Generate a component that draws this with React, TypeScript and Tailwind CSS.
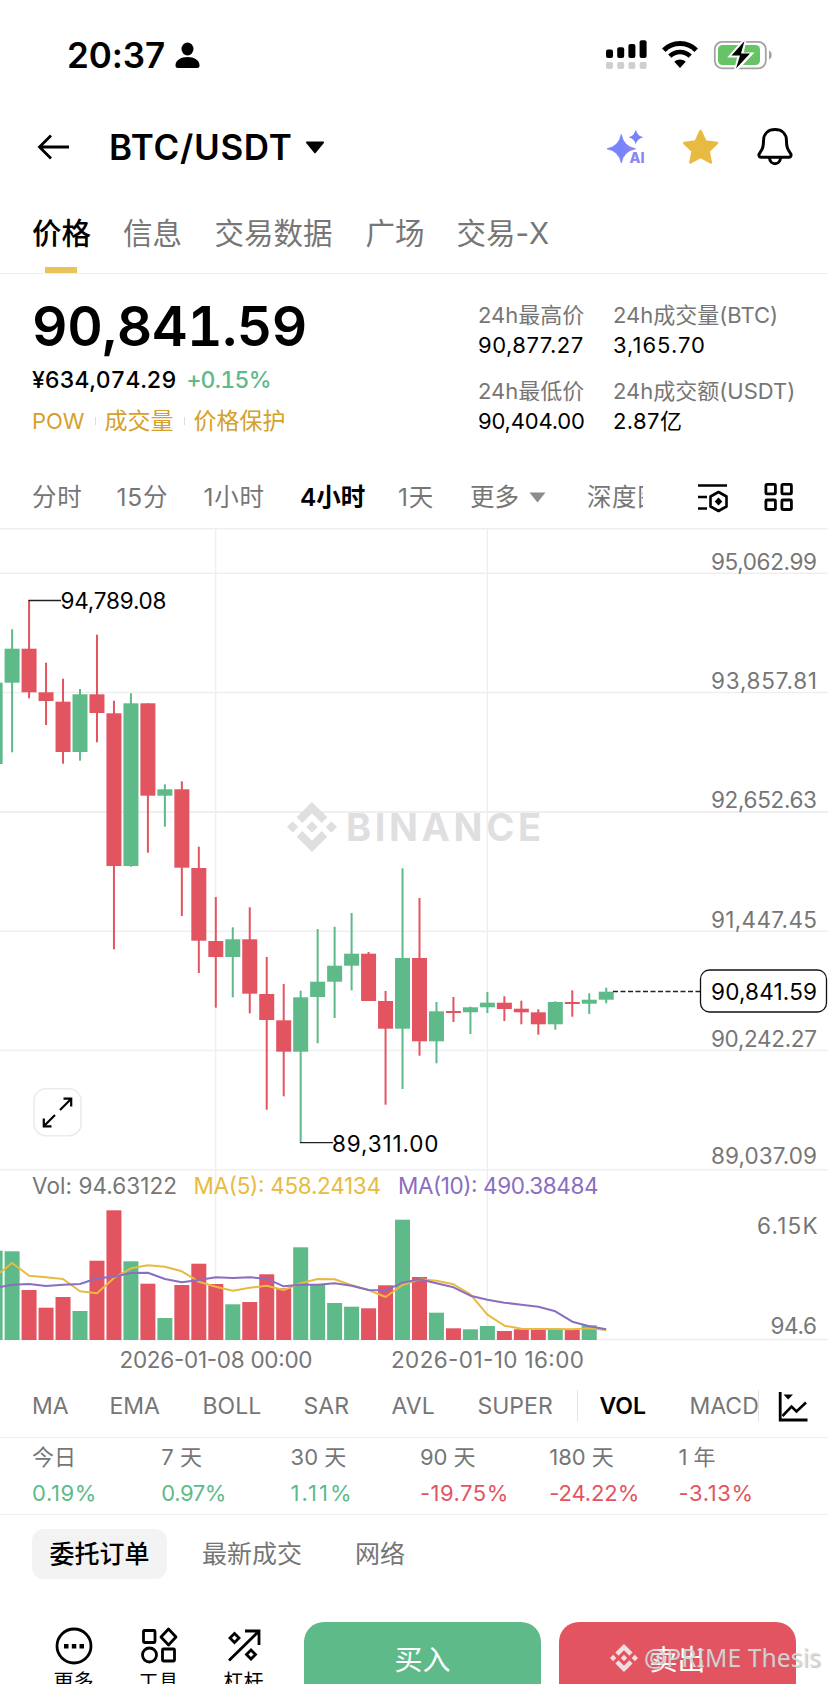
import { SiBinance } from "react-icons/si";

const GREEN = "#5eba89";
const RED = "#e35461";
const YELLOW = "#e7bb41";
const PURPLE = "#8a6ec1";

const STEP = 16.975;
const cx = (i: number) => 12.1 + i * STEP;

// [up, high, bodyTop, bodyBottom, low, volumeTop]
const candles: [number, number, number, number, number, number][] = [
  [1, 682.7, 682.7, 764, 764, 1250.7],
  [1, 629.3, 648.7, 682.7, 752.3, 1251.3],
  [0, 600, 648.7, 692.3, 698.3, 1290],
  [0, 662.7, 692.3, 701, 725, 1307.7],
  [0, 678.7, 701.7, 752, 763.7, 1297],
  [1, 689, 694.3, 752, 760.7, 1311],
  [0, 634.7, 694.3, 713, 742.3, 1260.7],
  [0, 700.7, 713.3, 866, 949.3, 1210.3],
  [1, 693.3, 703.3, 866, 866.7, 1261.3],
  [0, 703.3, 703.3, 795.7, 852.7, 1283.7],
  [1, 784.3, 789.3, 795.7, 826.7, 1318],
  [0, 781.3, 789.3, 867.7, 916, 1285],
  [0, 846.7, 868, 940.7, 973, 1263.7],
  [0, 897, 941, 957, 1007.7, 1284],
  [1, 927.3, 939.3, 957, 997.3, 1304.3],
  [0, 907.3, 939.3, 993.7, 1013.3, 1302],
  [0, 957, 994, 1020, 1109.7, 1274.3],
  [0, 984, 1020.3, 1051.7, 1096.3, 1288.3],
  [1, 990.7, 997.3, 1051.7, 1142.7, 1247.3],
  [1, 929, 981.7, 997, 1043.3, 1285],
  [1, 926.7, 965.7, 981.7, 1018, 1303],
  [1, 913, 953.7, 965.7, 990.3, 1306.7],
  [0, 952, 953.7, 1001, 1001, 1308.3],
  [0, 991, 1001, 1028.7, 1104.7, 1285.3],
  [1, 868.3, 958, 1028.7, 1089, 1219.7],
  [0, 898, 958, 1041.3, 1055.7, 1277],
  [1, 1002, 1011.3, 1041.3, 1063.3, 1312.7],
  [0, 997, 1011, 1013, 1022, 1328.3],
  [1, 1006.7, 1007.3, 1012.3, 1034, 1329.3],
  [1, 992, 1002.7, 1007.3, 1013, 1326],
  [0, 996.3, 1002.7, 1009, 1021, 1331],
  [0, 1000.7, 1008.7, 1012.3, 1024.3, 1329.3],
  [0, 1009.3, 1012.3, 1024.3, 1034.7, 1330],
  [1, 1001.3, 1002, 1024.3, 1029.7, 1330],
  [0, 990.3, 1002, 1004, 1016.7, 1330],
  [1, 993.3, 999.7, 1003.7, 1014, 1325.3],
  [1, 987.7, 991.7, 999.7, 1003.3, 1340],
];

const ma5 = [
  1263, 1275.7, 1277.3, 1279, 1291.3, 1293.3, 1278, 1268.3, 1265.3, 1266.7, 1271.3, 1281.7, 1286.7, 1290.7, 1287.7,
  1285.7, 1290, 1283.3, 1279, 1279.3, 1285.3, 1290, 1297, 1285, 1279.3, 1280.7, 1284.3, 1294.3, 1314.7, 1325.7,
  1328.7, 1329, 1329, 1329.2, 1328.3, 1330,
];
const ma10 = [
  1284.7, 1284, 1286, 1284.7, 1284, 1278.3, 1276.7, 1273, 1272.7, 1279, 1282.3, 1280, 1277.3, 1278, 1277.3, 1278.7,
  1286.3, 1284.7, 1284.7, 1283.3, 1285.7, 1290, 1290.3, 1282.7, 1279.3, 1283.3, 1287.3, 1295.7, 1299.7, 1302.7,
  1304.7, 1306.7, 1311.3, 1321.7, 1326.3, 1329.3,
];
const line = (start: number, ys: number[]) =>
  `0,${start} ` + ys.map((y, i) => `${cx(i).toFixed(1)},${y}`).join(" ");

const priceAxis: [string, number][] = [
  ["95,062.99", 569.5],
  ["93,857.81", 689],
  ["92,652.63", 808],
  ["91,447.45", 927.5],
  ["90,242.27", 1046.5],
  ["89,037.09", 1163.5],
];

const topTabs = [
  { label: "价格", w: "w-[91px]" },
  { label: "信息", w: "w-[91.5px]" },
  { label: "交易数据", w: "w-[151px]" },
  { label: "广场", w: "w-[91px]" },
  { label: "交易-X", w: "w-[100px]" },
];

const intervals = [
  { label: "分时", w: "w-[84.5px]" },
  { label: "15分", w: "w-[87px]" },
  { label: "1小时", w: "w-[96.5px]" },
  { label: "4小时", w: "w-[98px]", active: true },
  { label: "1天", w: "w-[72px]" },
];

const indicators = [
  { label: "MA", w: "w-[77.5px]" },
  { label: "EMA", w: "w-[93px]" },
  { label: "BOLL", w: "w-[101px]" },
  { label: "SAR", w: "w-[88px]" },
  { label: "AVL", w: "w-[86px]" },
  { label: "SUPER", w: "w-[99px]" },
];

const periods = [
  { label: "今日", value: "0.19%", tracking: "tracking-[0.6px]" },
  { label: "7 天", value: "0.97%", tracking: "tracking-[-0.4px]" },
  { label: "30 天", value: "1.11%", tracking: "tracking-[2px]" },
  { label: "90 天", value: "-19.75%", tracking: "tracking-[0.5px]" },
  { label: "180 天", value: "-24.22%", tracking: "tracking-[-0.1px]" },
  { label: "1 年", value: "-3.13%", tracking: "tracking-[0.6px]" },
];

const StatusBar = () => (
  <div className="flex h-[110px] shrink-0 items-center pl-[67px] pr-[56px]">
    <span className="text-[35px] font-semibold leading-none tracking-[-0.1px]">20:37</span>
    <svg className="ml-[10px]" width="25" height="27" viewBox="0 0 25 27">
      <ellipse cx="12.5" cy="7" rx="6" ry="6.5" />
      <path d="M0.5 23.5C0.5 18 6 15 12.5 15s12 3 12 8.500q0 2.500-2.500 2.500H3q-2.500 0-2.500-2.500z" />
    </svg>
    <svg className="ml-auto" width="42" height="30" viewBox="605 40 42 30">
      {[49.5, 47.3, 44, 40.3].map((y, i) => (
        <g key={i}>
          <rect x={606 + i * 11.200} y={y} width="7" height={58 - y} rx="2" />
          <rect x={606 + i * 11.200} y="62" width="7" height="7" rx="2" fill="#cfcfcf" />
        </g>
      ))}
    </svg>
    <svg className="ml-[14px]" width="38" height="30" viewBox="661 40 38 30">
      <path d="M663.800 50.300C672.500 41.300 687.500 41.300 696.200 50.300" fill="none" stroke="#000" strokeWidth="5" />
      <path d="M669.800 56.200C675.500 50.500 684.500 50.500 690.200 56.200" fill="none" stroke="#000" strokeWidth="4.600" />
      <path d="M674.300 61.800C677.500 58.700 682.500 58.700 685.700 61.800L680 68z" />
    </svg>
    <svg className="ml-[13px]" width="60" height="30" viewBox="711 40 60 30">
      <rect x="713.800" y="41.800" width="51" height="26.500" rx="7.500" fill="none" stroke="#a3a3a3" strokeWidth="1.800" />
      <path d="M768 50.500c3.600 1.500 3.600 7.500 0 9z" fill="#a3a3a3" />
      <rect x="717" y="45" width="42" height="20" rx="4.500" fill="#67c466" />
      <path d="M744 39.500L729.500 56h8.500l-3.500 14.500L750 54h-9z" stroke="#fff" strokeWidth="3" />
      <path d="M743.500 41L730.500 55.500h8.500L735 68.500L749 53.500h-9z" />
    </svg>
  </div>
);

const Header = () => (
  <div className="flex h-[74px] shrink-0 items-center pl-[37px] pr-[34px]">
    <svg width="33" height="26" viewBox="0 0 33 26" fill="none" stroke="#000" strokeWidth="2.800">
      <path d="M32 13H2.500M14 1.500L2.500 13L14 24.500" />
    </svg>
    <span className="ml-[39px] text-[35px] font-semibold leading-none tracking-[0.7px]">BTC/USDT</span>
    <svg className="ml-[12px]" width="20" height="13" viewBox="0 0 20 13">
      <path d="M1.500 0.500h17q1 0.500 0.300 1.500L10.700 12q-0.700 0.700-1.400 0L1.200 2q-0.700-1 0.300-1.500z" />
    </svg>
    <svg className="ml-auto" width="40" height="36" viewBox="605 128 40 36">
      <defs>
        <linearGradient id="ai" x1="0" x2="1">
          <stop offset="0.5" stopColor="#7584fb" />
          <stop offset="1" stopColor="#9b86ea" />
        </linearGradient>
      </defs>
      <path d="M620.300 133.500Q622.500 145.500 634.500 147.800Q622.500 150 620.300 162Q618 150 606 147.800Q618 145.500 620.300 133.500z" fill="url(#ai)" stroke="#7584fb" strokeWidth="0.8" />
      <path d="M634.800 128.500Q636.200 135 642.300 136.300Q636.200 137.500 634.800 143.500Q633.400 137.500 627.500 136.300Q633.400 135 634.800 128.500z" fill="#7584fb" />
      <text x="628.500" y="162" fontSize="14" fontWeight="800" textLength="15" lengthAdjust="spacingAndGlyphs" fill="#8c86f2">AI</text>
    </svg>
    <svg className="ml-[35px]" width="40" height="38" viewBox="680 127 40 38">
      <path
        d="M699.600 130L704.500 140.500L716 142L707.600 150L709.800 161.500L699.600 156L689.400 161.500L691.600 150L683.200 142L694.700 140.500z"
        fill={YELLOW}
        stroke={YELLOW}
        strokeWidth="2.500"
        strokeLinejoin="round"
      />
    </svg>
    <svg className="ml-[35px]" width="38" height="38" viewBox="754 127 38 38" fill="none" stroke="#000" strokeWidth="3">
      <path d="M761.500 140C761.500 132.500 766.500 128.600 773 128.600S784.500 132.500 784.500 140Q784.500 147 787.300 150.500L789 153.200Q789.500 156.200 786.500 156.200H759.500Q756.500 156.200 757 153.200L758.700 150.500Q761.500 147 761.500 140z" />
      <path d="M767.500 157C768 164.500 778 164.500 778.500 157" />
    </svg>
  </div>
);

const Stat = ({ label, value, tracking }: { label: string; value: string; tracking: string }) => (
  <div className="h-[76px] whitespace-nowrap text-[22px]">
    <div className="h-[30px] leading-[30px] text-[#767676]">{label}</div>
    <div className={`h-[30px] leading-[30px] ${tracking}`}>{value}</div>
  </div>
);

const Chart = () => (
  <svg className="block shrink-0" width="828" height="850" viewBox="0 528 828 850" fontSize="22.500" fontFamily="Inter">
    <g stroke="#efeff0" strokeWidth="1.500">
      {[528.7, 573.3, 692.5, 931.3, 1050.5, 1169.7, 1339.5].map((y) => (
        <path key={y} d={`M0 ${y}H828`} />
      ))}
      <path d="M0 812H828" strokeWidth="2" />
      <path d="M215.600 528V1340M487.300 528V1340" />
    </g>

    <SiBinance x={287} y={802} size={50} color="#dfdfe1" />
    <text x="346" y="841" fontSize="38" fontWeight="700" fill="#dfdfe1" textLength="195">BINANCE</text>

    {candles.map(([up, high, top, bottom, low, vol], n) => {
      const x = cx(n - 1);
      const color = up ? GREEN : RED;
      return (
        <g key={n} fill={color}>
          <rect x={x - 1} y={high} width="2" height={low - high} />
          <rect x={x - 7.5} y={top} width="15" height={bottom - top} />
          <rect x={x - 7.5} y={vol} width="15" height={1340 - vol} />
        </g>
      );
    })}

    <g fill="none" strokeWidth="2" strokeLinejoin="round">
      <polyline points={line(1272.7, ma5)} stroke={YELLOW} />
      <polyline points={line(1287, ma10)} stroke={PURPLE} />
    </g>

    <g stroke="#222" strokeWidth="1.300">
      <path d="M28.500 600.500H61M300 1142.700H333" />
      <path d="M613 991.500H700" strokeDasharray="5 2.500" />
    </g>
    <text x="60.500" y="609" textLength="106">94,789.08</text>
    <text x="332" y="1151.500" textLength="106.500">89,311.00</text>

    <g fill="#767676">
      {priceAxis.map(([label, y]) => (
        <text key={label} x="711" y={y} textLength="106">{label}</text>
      ))}
      <text x="757" y="1233.500" textLength="60.500">6.15K</text>
      <text x="770.500" y="1333.500" textLength="46.500">94.6</text>
      <text x="119.500" y="1367.500" textLength="193">2026-01-08 00:00</text>
      <text x="391" y="1367.500" textLength="193">2026-01-10 16:00</text>
      <text x="32" y="1193.500" textLength="145">Vol: 94.63122</text>
    </g>
    <text x="193.500" y="1193.500" textLength="187.500" fill={YELLOW}>MA(5): 458.24134</text>
    <text x="398" y="1193.500" textLength="200.500" fill={PURPLE}>MA(10): 490.38484</text>

    <rect x="700.500" y="970" width="126" height="42" rx="9" fill="#fff" stroke="#111" strokeWidth="1.300" />
    <text x="711" y="1000" textLength="106">90,841.59</text>

    <rect x="34" y="1088.700" width="47" height="47" rx="12" fill="#fff" stroke="#ebebed" strokeWidth="1.600" />
    <g fill="none" stroke="#000" strokeWidth="2.200">
      <path d="M60 1110L71 1099M63.500 1098.700H71.200V1106.500" />
      <path d="M55 1115L44 1126M43.800 1118.500V1126.300H51.500" />
    </g>
  </svg>
);

const App = () => {
  return (
    <div className="relative flex h-[1684px] w-[828px] flex-col overflow-hidden bg-white font-['Inter','Noto_Sans_CJK_SC',sans-serif] text-black">
      <StatusBar />
      <Header />

      <div className="flex h-[90px] shrink-0 border-b border-[#eeeeef] pl-[32px] pt-[29px] text-[29.500px] leading-[40px] text-[#767676]">
        {topTabs.map((t, i) => (
          <div key={t.label} className={`${t.w} flex shrink-0 flex-col`}>
            <span className={i === 0 ? "font-medium text-black" : ""}>{t.label}</span>
            {i === 0 && <span className="ml-[13px] mt-[14px] h-[6px] w-[32px] bg-[#e9c259]" />}
          </div>
        ))}
      </div>

      <div className="flex h-[188px] shrink-0 pl-[32px]">
        <div className="w-[446px]">
          <div className="mt-[24px] text-[55px] font-semibold leading-[56px] tracking-[-0.4px] tabular-nums">90,841.59</div>
          <div className="mt-[12px] flex text-[23px] font-medium leading-[28px] tabular-nums">
            <span>¥634,074.29</span>
            <span className="ml-[10px] tracking-[-0.7px] text-[#5eba89]">+0.15%</span>
          </div>
          <div className="mt-[12px] flex items-center text-[23px] leading-[30px] text-[#d5a02b]">
            <span className="text-[22px]">POW</span>
            <i className="ml-[10px] mr-[9px] h-[8px] w-px bg-[#dddddd]" />
            <span>成交量</span>
            <i className="ml-[10px] mr-[9px] h-[8px] w-px bg-[#dddddd]" />
            <span>价格保护</span>
          </div>
        </div>
        <div className="mt-[26px] w-[135px]">
          <Stat label="24h最高价" value="90,877.27" tracking="tracking-[0.5px]" />
          <Stat label="24h最低价" value="90,404.00" tracking="tracking-[-0.2px]" />
        </div>
        <div className="mt-[26px]">
          <Stat label="24h成交量(BTC)" value="3,165.70" tracking="tracking-[1px]" />
          <Stat label="24h成交额(USDT)" value="2.87亿" tracking="tracking-[0.4px]" />
        </div>
      </div>

      <div className="flex h-[66px] shrink-0 items-center pl-[32px] pt-[4px] text-[24.500px] text-[#767676]">
        {intervals.map((t) => (
          <span key={t.label} className={`${t.w} shrink-0 ${t.active ? "font-semibold text-black" : "tracking-[0.8px]"}`}>
            {t.label}
          </span>
        ))}
        <span>更多</span>
        <svg className="ml-[10px]" width="17" height="11" viewBox="0 0 17 11">
          <path d="M0.500 0.500h16L8.500 10.500z" fill="#8c8c8c" />
        </svg>
        <span className="ml-[41px] w-[56px] overflow-hidden whitespace-nowrap tracking-[0.6px]">深度图</span>
        <svg className="ml-[54px] mt-[2px]" width="32" height="30" viewBox="698 483 32 30" fill="none" stroke="#000" strokeWidth="2.600">
          <path d="M699 485.500H728M699 497H708M699 508.500H708" />
          <path d="M719.500 492L727.500 496.500V506.500L719.500 511L711.500 506.500V496.500z" strokeLinejoin="round" />
          <path d="M719.500 497.500L723.300 501.500L719.500 505.500L715.700 501.500z" fill="#000" stroke="none" />
        </svg>
        <svg className="ml-[35px]" width="30" height="30" viewBox="0 0 30 30" fill="none" stroke="#000" strokeWidth="2.800">
          <rect x="1.900" y="2.400" width="9.500" height="9.500" rx="1" />
          <rect x="17.900" y="2.400" width="9.500" height="9.500" rx="1" />
          <rect x="1.900" y="18" width="9.500" height="9.500" rx="1" />
          <rect x="17.900" y="18" width="9.500" height="9.500" rx="1" />
        </svg>
      </div>

      <Chart />

      <div className="flex h-[60px] shrink-0 items-center border-b border-[#eeeeef] pb-[3px] pl-[32px] text-[23px] leading-[30px] text-[#767676]">
        {indicators.map((t) => (
          <span key={t.label} className={`${t.w} shrink-0`}>{t.label}</span>
        ))}
        <i className="mr-[22px] h-[32px] w-px bg-[#e4e4e6]" />
        <span className="w-[90px] font-semibold text-black">VOL</span>
        <span className="w-[68px] shrink-0 overflow-hidden">MACD</span>
        <i className="h-[32px] w-px bg-[#e4e4e6]" />
        <svg className="ml-[18px]" width="32" height="32" viewBox="778 1389 32 32" fill="none" stroke="#000" strokeWidth="2.600">
          <path d="M781.200 1391V1419H808.500" strokeWidth="2.800" />
          <path d="M783.500 1415L792.500 1405.500L797.500 1410.500L807 1401.500" />
          <path d="M784.500 1393.500H794L789.200 1398.500z" fill="#000" stroke="none" />
        </svg>
      </div>

      <div className="grid h-[77px] shrink-0 grid-cols-[repeat(6,129.300px)] border-b border-[#eeeeef] pl-[32px] pt-[2px] text-[22px]">
        {periods.map((p) => (
          <div key={p.label}>
            <div className="h-[35px] leading-[35px] text-[#767676]">{p.label}</div>
            <div
              className={`h-[34px] leading-[36px] ${p.tracking} ${p.value.startsWith("-") ? "text-[#e35461]" : "text-[#5eba89]"}`}
            >
              {p.value}
            </div>
          </div>
        ))}
      </div>

      <div className="flex h-[107px] shrink-0 pl-[32px] pt-[14px] text-[25px] leading-[50px] text-[#767676]">
        <span className="h-[50px] w-[135px] rounded-xl bg-[#f3f3f3] text-center font-medium text-black">委托订单</span>
        <span className="ml-[35px]">最新成交</span>
        <span className="ml-[53px]">网络</span>
      </div>

      <div className="flex h-[90px] shrink-0 pl-[31px] text-[20px] leading-[26px]">
        <div className="flex w-[85px] flex-col items-center pt-[5px]">
          <svg width="38" height="38" viewBox="0 0 38 38">
            <circle cx="19" cy="19" r="17" fill="none" stroke="#000" strokeWidth="2.800" />
            <path d="M9 17h4.500v4.500H9zM16.800 17h4.500v4.500h-4.500zM24.500 17H29v4.500h-4.500z" />
          </svg>
          <span className="mt-[4px]">更多</span>
        </div>
        <div className="flex w-[85px] flex-col items-center pt-[5px]">
          <svg width="38" height="38" viewBox="0 0 38 38" fill="none" stroke="#000" strokeWidth="2.800">
            <rect x="3.500" y="3.500" width="11.500" height="12" rx="1" />
            <path d="M28.500 2L36 10L28.500 18L21 10z" strokeLinejoin="round" />
            <circle cx="9.500" cy="28" r="7" />
            <rect x="22.500" y="22" width="12" height="12" rx="1" />
          </svg>
          <span className="mt-[4px]">工具</span>
        </div>
        <div className="flex w-[85px] flex-col items-center pt-[5px]">
          <svg width="38" height="38" viewBox="0 0 38 38" fill="none" stroke="#000" strokeWidth="2.800">
            <path d="M4 33.500L33.500 4.500M20 4H34V18" />
            <path d="M9.500 6.500L14 11L9.500 15.500L5 11zM26 23L30.500 27.500L26 32L21.500 27.500z" />
          </svg>
          <span className="mt-[4px]">杠杆</span>
        </div>
        <div className="ml-[18px] h-[90px] w-[237px] rounded-[20px] bg-[#5eba89] pt-[20px] text-center text-[28px] leading-[36px] text-white">
          买入
        </div>
        <div className="ml-[18px] h-[90px] w-[237px] rounded-[20px] bg-[#e35461] pt-[20px] text-center text-[28px] leading-[36px] text-white">
          卖出
        </div>
      </div>

      <div className="absolute bottom-[8px] right-[7px] flex items-center font-['Noto_Sans'] text-[24.500px] leading-[36px] text-[#dcdcdc]/90 [text-shadow:1px_1px_1px_#8888]">
        <SiBinance className="mr-[6px] text-[#f3dfe0]" size={28} />
        <span className="tracking-[0.15px]">@PRIME Thesis</span>
      </div>
    </div>
  );
};

export default App;
